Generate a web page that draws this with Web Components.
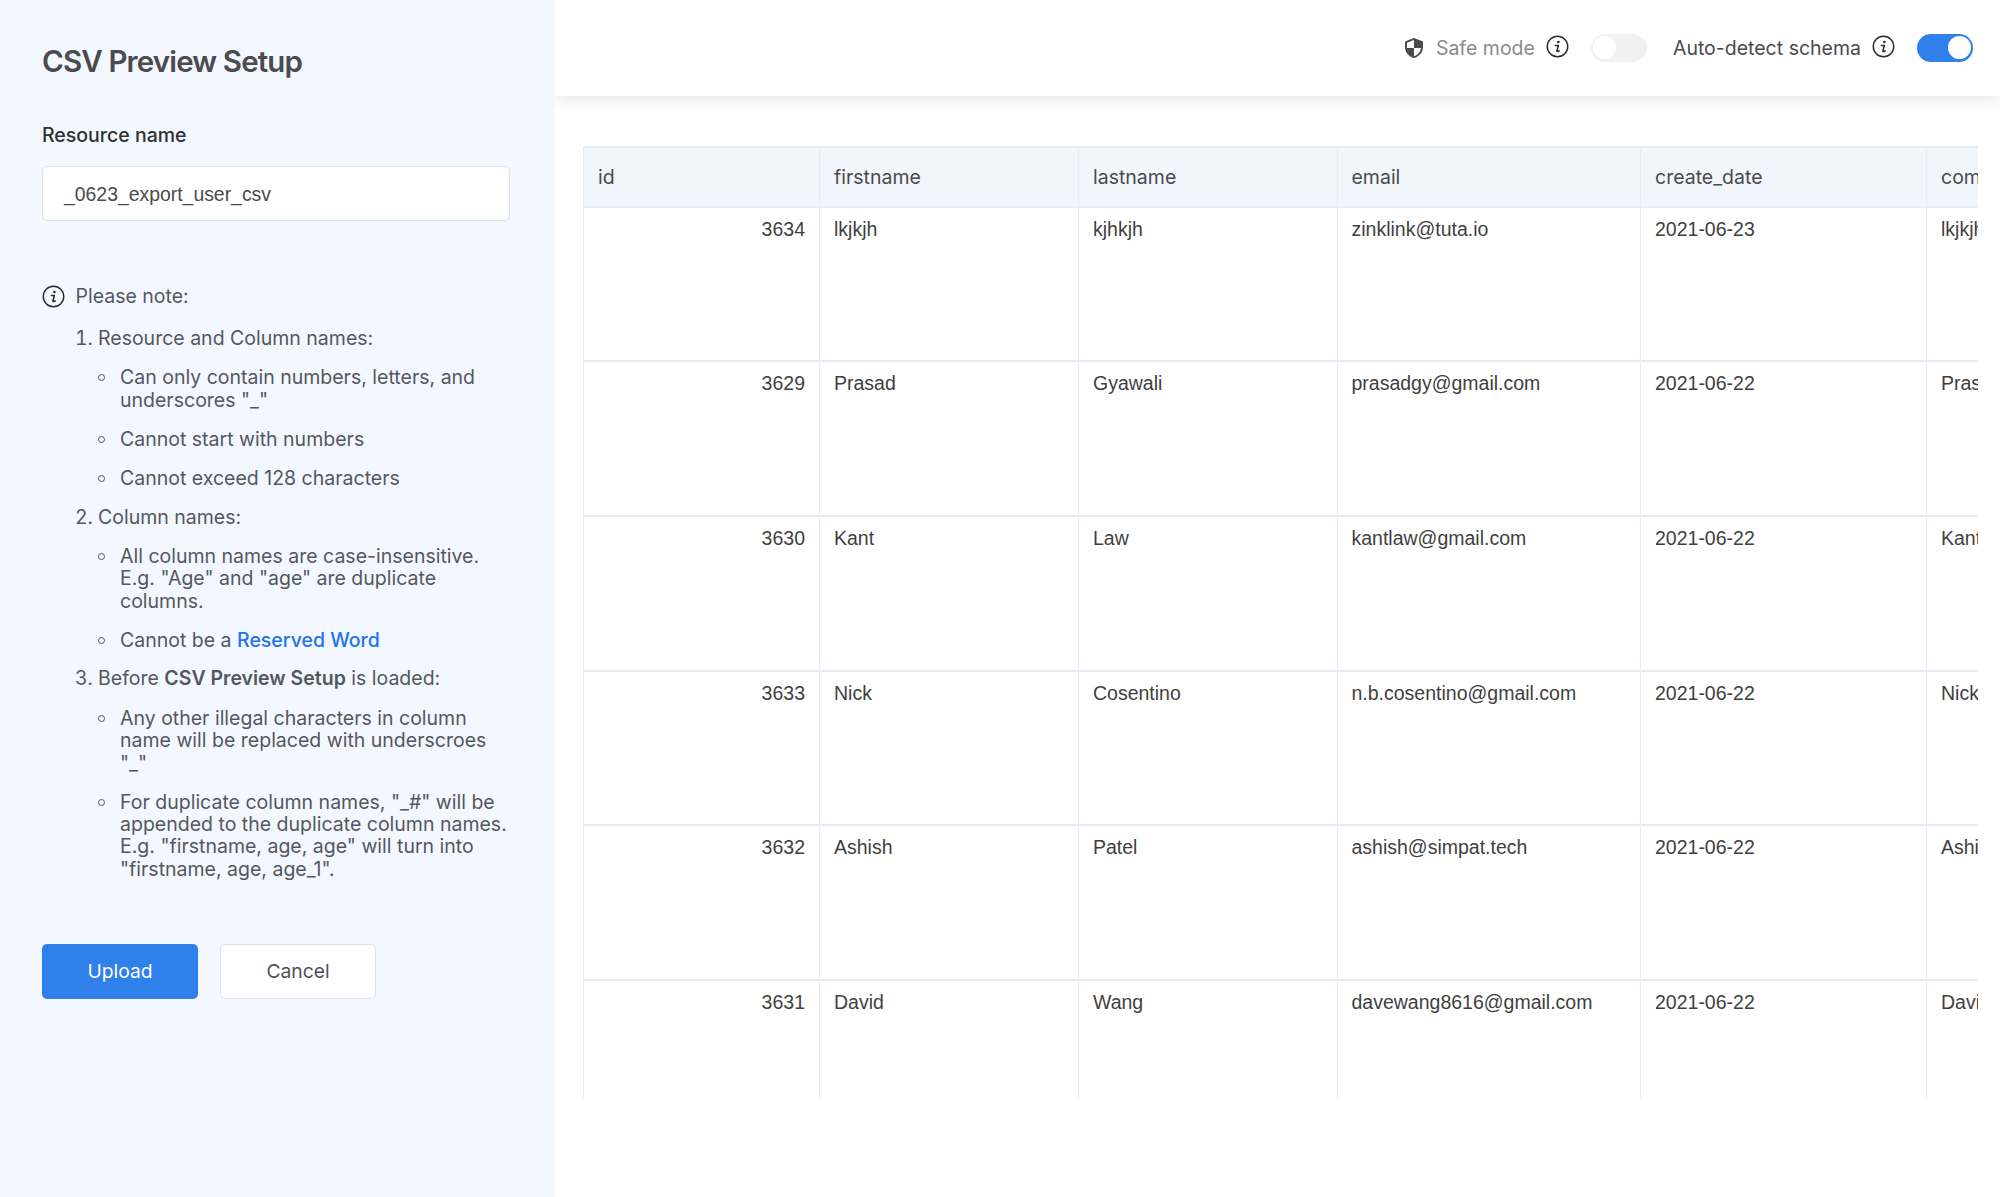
<!DOCTYPE html>
<html><head><meta charset="utf-8"><style>
html,body{margin:0;height:100%;background:#fff}
body{font-family:Inter,"Liberation Sans",sans-serif}
</style></head><body>
<csv-app></csv-app>
<template id="t-app"><style>
:host{display:flex;width:2000px;height:1197px;overflow:hidden}
</style><csv-sidebar></csv-sidebar><csv-main></csv-main></template>

<template id="t-side"><style>
:host{display:block;box-sizing:border-box;width:555px;flex:none;height:1197px;background:#f3f7ff;padding:43px 45px 0 42px;color:#54575d;font-family:Inter,sans-serif;font-size:19.5px;line-height:22.4px}
h1{margin:0;font-size:29.5px;line-height:36px;font-weight:600;color:#4b4b4b;letter-spacing:-.85px;white-space:nowrap}
label{display:block;margin-top:44px;color:#2f3033;font-weight:500;line-height:24px}
.input{box-sizing:border-box;height:55px;width:468px;margin-top:19px;background:#fff;border:1.500px solid #dde1ec;border-radius:5px;padding:2px 21px 0;display:flex;align-items:center;color:#4a4a4a;font-family:"Liberation Sans",sans-serif;font-size:19.400px}
.note{display:flex;align-items:center;gap:10.5px;margin-top:64px;height:22.5px}
ol{margin:19.5px 0 0;padding:0 0 0 56px;list-style:decimal}
ul{margin:17px 0 0;padding:0 0 0 22px;list-style:none}
ol>li+li{margin-top:16.3px}
ul>li{position:relative}
ul>li+li{margin-top:16.6px}
ul>li::before{content:"";position:absolute;left:-22px;top:8px;box-sizing:border-box;width:7px;height:7px;border:1.600px solid #505359;border-radius:50%}
a{color:#1f74ee;text-decoration:none;font-weight:500}
b{font-weight:600}
.btns{display:flex;gap:22px;margin-top:63.5px}
.btn{box-sizing:border-box;width:156px;height:55.500px;border-radius:5px;display:flex;align-items:center;justify-content:center;font-size:19.3px}
.p{background:#3080ec;color:#fff}
.s{background:#fff;border:1.500px solid #dde1ec;color:#4e5157}
</style>
<h1>CSV Preview Setup</h1>
<label>Resource name</label>
<div class="input">_0623_export_user_csv</div>
<div class="note"><csv-info size="23"></csv-info><span>Please note:</span></div>
<ol>
<li>Resource and Column names:
<ul><li>Can only contain numbers, letters, and underscores "_"</li><li>Cannot start with numbers</li><li>Cannot exceed 128 characters</li></ul></li>
<li>Column names:
<ul><li>All column names are case-insensitive. E.g. "Age" and "age" are duplicate columns.</li><li>Cannot be a <a>Reserved Word</a></li></ul></li>
<li>Before <b>CSV Preview Setup</b> is loaded:
<ul><li>Any other illegal characters in column name will be replaced with underscroes "_"</li><li>For duplicate column names, "_#" will be appended to the duplicate column names. E.g. "firstname, age, age" will turn into "firstname, age, age_1".</li></ul></li>
</ol>
<div class="btns"><div class="btn p">Upload</div><div class="btn s">Cancel</div></div>
</template>

<template id="t-info"><style>:host{display:inline-flex;flex:none}svg{display:block}</style>
<svg viewBox="0 0 24 24" fill="none"><circle cx="12" cy="12" r="10.700" stroke="#2b2b2b" stroke-width="1.500"/><circle cx="12.900" cy="7.300" r="1.400" fill="#2b2b2b"/><path d="M9.900 11h3l-1.500 5.500c-.1.500.2.800.6.700l1.700-.6" stroke="#2b2b2b" stroke-width="1.600" stroke-linecap="round" stroke-linejoin="round"/></svg></template>

<template id="t-toggle"><style>
:host{display:block;box-sizing:border-box;width:56px;height:28px;border-radius:14px;background:#f1f1f1;padding:2.500px;flex:none}
:host([on]){background:#3080ec}
i{display:block;box-sizing:border-box;width:23px;height:23px;border-radius:50%;background:#fff}
:host([on]) i{margin-left:28px}
</style><i></i></template>

<template id="t-main"><style>
:host{display:flex;flex-direction:column;flex:1;min-width:0;height:1197px;background:#fff;overflow:hidden}
header{height:96px;flex:none;display:flex;align-items:center;justify-content:flex-end;padding:0 27px 0 0;box-shadow:0 2px 14px rgba(40,50,70,.13);font-size:19.500px;color:#4a4a4a;position:relative}
.sm{color:#8a8a8a;margin-left:10px}
.sh{display:block}
.i1{margin-left:11px;margin-top:-3px}.t1{margin-left:22px;margin-top:-1px}.ad{margin-left:26px}
section{padding:50px 22px 0 28px}
</style>
<header>
<svg class="sh" width="24" height="22" viewBox="0 0 24 24" preserveAspectRatio="none"><path fill="#4a4a4a" d="M12 1 3 5v6c0 5.550 3.840 10.740 9 12 5.160-1.260 9-6.450 9-12V5l-9-4Zm0 10.990h7c-.53 4.120-3.280 7.790-7 8.940V12H5V6.300l7-3.110v8.800Z"/></svg>
<span class="sm">Safe mode</span><csv-info class="i1" size="23"></csv-info><csv-toggle class="t1"></csv-toggle>
<span class="ad">Auto-detect schema</span><csv-info class="i1" size="23"></csv-info><csv-toggle class="t1" on></csv-toggle>
</header>
<section><csv-grid></csv-grid></section>
</template>

<template id="t-grid"><style>
:host{display:block;width:1395px;height:952px;overflow:hidden;box-sizing:border-box}
.g{display:grid;grid-template-columns:236px 259px 258.500px 303.500px 286px 200px;width:1543px;border-top:2px solid #e8ebf3;border-left:1.500px solid #e8ebf3}
.c{box-sizing:border-box;border-right:1.500px solid #e8ebf3;border-bottom:2px solid #e8ebf3;padding:9px 14px 0;height:154.700px;font-family:"Liberation Sans",sans-serif;font-size:19.500px;line-height:24px;color:#3f3f3f;white-space:nowrap;overflow:hidden}
.h{background:#f1f6fd;height:59.500px;padding:0 14px;display:flex;align-items:center;font-family:Inter,sans-serif;font-size:19.500px;color:#4a4a4a}
.n{text-align:right}
</style><div class="g" id="g"></div></template>

<script>
const tpl=id=>document.getElementById(id).content.cloneNode(true);
const mk=(name,id,init)=>customElements.define(name,class extends HTMLElement{constructor(){super();this.attachShadow({mode:'open'}).appendChild(tpl(id));}connectedCallback(){init&&init.call(this)}});
mk('csv-info','t-info',function(){const s=this.getAttribute('size')||23;const v=this.shadowRoot.querySelector('svg');v.setAttribute('width',s);v.setAttribute('height',s);});
mk('csv-toggle','t-toggle');
mk('csv-sidebar','t-side');
mk('csv-main','t-main');
const cols=['id','firstname','lastname','email','create_date','company'];
const rows=[[3634,'lkjkjh','kjhkjh','zinklink@tuta.io','2021-06-23','lkjkjh'],[3629,'Prasad','Gyawali','prasadgy@gmail.com','2021-06-22','Prasad'],[3630,'Kant','Law','kantlaw@gmail.com','2021-06-22','Kant'],[3633,'Nick','Cosentino','n.b.cosentino@gmail.com','2021-06-22','Nick'],[3632,'Ashish','Patel','ashish@simpat.tech','2021-06-22','Ashish'],[3631,'David','Wang','davewang8616@gmail.com','2021-06-22','David']];
mk('csv-grid','t-grid',function(){const g=this.shadowRoot.getElementById('g');if(g.children.length)return;const add=(t,c)=>{const d=document.createElement('div');d.className='c '+c;d.textContent=t;g.appendChild(d)};cols.forEach(c=>add(c,'h'));rows.forEach(r=>r.forEach((v,i)=>add(v,i?'':'n')));});
mk('csv-app','t-app');
</script>
</body></html>
